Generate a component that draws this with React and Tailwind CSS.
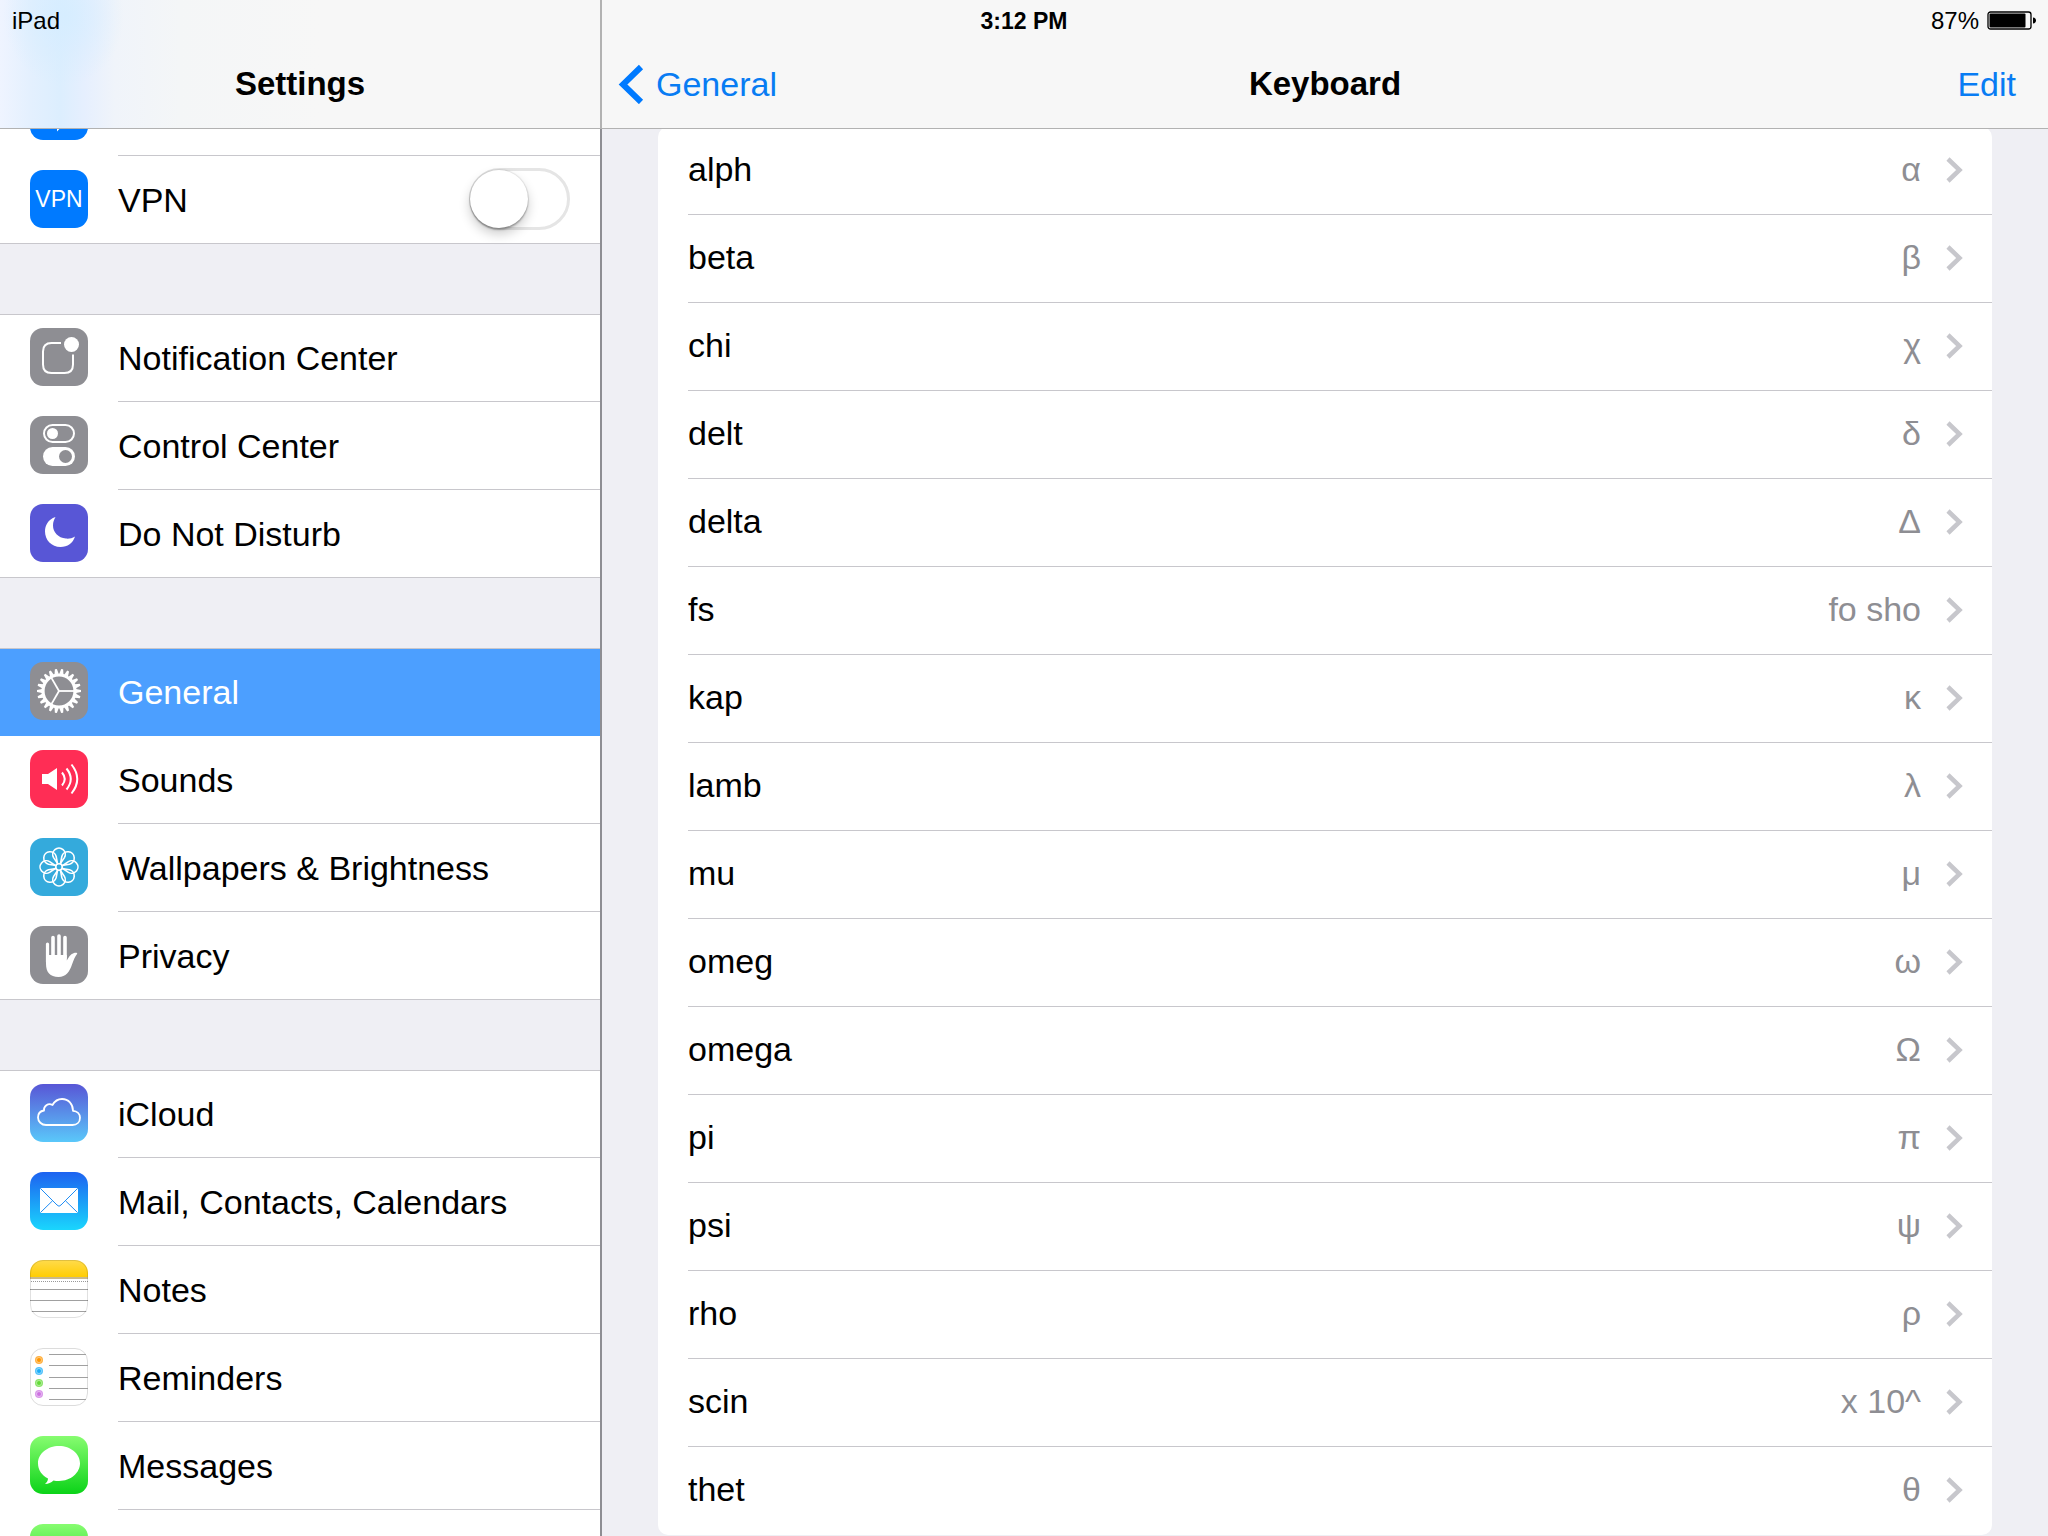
const GRAY = '#8e8e93';

function Tile({ children }) {
  return (
    <svg viewBox="0 0 58 58" className="size-[58px] shrink-0" aria-hidden="true">
      {children}
    </svg>
  );
}

function Plate({ fill }) {
  return <rect width="58" height="58" rx="13" fill={fill} />;
}

function Gradient({ id, from, to }) {
  return (
    <defs>
      <linearGradient id={id} x1="0" y1="0" x2="0" y2="1">
        <stop offset="0" stopColor={from} />
        <stop offset="1" stopColor={to} />
      </linearGradient>
    </defs>
  );
}

function BluetoothIcon() {
  return (
    <Tile>
      <Plate fill="#007aff" />
      <path d="M19 20 37 38 28 47V11L37 20 19 38" fill="none" stroke="#fff" strokeWidth="2" />
    </Tile>
  );
}

function VpnIcon() {
  return (
    <span
      aria-hidden="true"
      className="flex size-[58px] shrink-0 items-center justify-center rounded-[13px] bg-[#007aff] text-[23px] leading-none text-white"
    >
      VPN
    </span>
  );
}

function NotificationIcon() {
  return (
    <Tile>
      <Plate fill={GRAY} />
      <path
        d="M31 15H21.500C16 15 13 18 13 23.500V36.500C13 42 16 45 21.500 45H34.500C40 45 43 42 43 36.500V26.500"
        fill="none"
        stroke="#fff"
        strokeWidth="2"
      />
      <circle cx="41.500" cy="16.500" r="7.500" fill="#fff" />
    </Tile>
  );
}

function ControlIcon() {
  return (
    <Tile>
      <Plate fill={GRAY} />
      <rect x="14" y="9" width="30" height="17" rx="8.500" fill="none" stroke="#fff" strokeWidth="2" />
      <circle cx="22.500" cy="17.500" r="5.500" fill="#fff" />
      <rect x="13" y="31" width="32" height="19" rx="9.500" fill="#fff" />
      <circle cx="35.500" cy="40.500" r="6.500" fill={GRAY} />
    </Tile>
  );
}

function MoonIcon() {
  return (
    <Tile>
      <Plate fill="#5856d6" />
      <path
        d="M25.500 13C18 15.500 15 21.500 15 27.500C15 36 21.500 43 30.500 43C37.500 43 43 39 45 32.500C42 34.200 39 35 36 34.600C28 33.800 23 28 23 21.500C23 18 24 15.500 25.500 13Z"
        fill="#fff"
      />
    </Tile>
  );
}

const TEETH = Array.from({ length: 22 }, (_, i) => (i * 360) / 22);

function GearIcon() {
  return (
    <Tile>
      <Plate fill={GRAY} />
      <g stroke="#fff" fill="none">
        <circle cx="29" cy="29" r="16" strokeWidth="3.200" />
        {[0, 120, 240].map((a) => (
          <path key={a} d="M29 29H45" strokeWidth="1.800" transform={`rotate(${a} 29 29)`} />
        ))}
      </g>
      {TEETH.map((a) => (
        <path key={a} d="M46 26.900 51 28V30L46 31.100Z" fill="#fff" transform={`rotate(${a} 29 29)`} />
      ))}
    </Tile>
  );
}

function SpeakerIcon() {
  return (
    <Tile>
      <Plate fill="#ff2d55" />
      <path d="M12 24H18L27 18V40L18 34H12Z" fill="#fff" />
      <g fill="none" stroke="#fff" strokeWidth="2">
        <path d="M32 22.500Q37.500 29 32 35.500" />
        <path d="M36.500 18.500Q45 29 36.500 39.500" />
        <path d="M41.500 14.500Q53 29 41.500 43.500" />
      </g>
    </Tile>
  );
}

const PETALS = Array.from({ length: 8 }, (_, i) => i * 45);

function FlowerIcon() {
  return (
    <Tile>
      <Plate fill="#34aadc" />
      <g fill="none" stroke="#fff" strokeWidth="1.600">
        {PETALS.map((a) => (
          <path
            key={a}
            d="M28 26 23.600 19.600A6.300 6.300 0 1 1 34.400 19.600L30 26"
            transform={`rotate(${a} 29 29)`}
          />
        ))}
        <circle cx="29" cy="29" r="3.200" />
      </g>
    </Tile>
  );
}

function HandIcon() {
  return (
    <Tile>
      <Plate fill={GRAY} />
      <g stroke="#fff" strokeLinecap="round" fill="none">
        <path d="M17.500 18V36" strokeWidth="3.200" />
        <path d="M23 11.500V32M29 10V32M35 11.500V32" strokeWidth="3.600" />
      </g>
      <path
        d="M16 29H36.800V34.500C38.500 31.500 40.500 28 43.500 27.200C45.500 26.700 47.500 26.600 47.200 27.800C45 30.500 43.500 34.500 42 38.500C39.500 46 36 51 28.500 51C20 51 16 46 16 38Z"
        fill="#fff"
      />
    </Tile>
  );
}

function CloudIcon() {
  return (
    <Tile>
      <Gradient id="cloud" from="#5856d6" to="#5ac8fa" />
      <Plate fill="url(#cloud)" />
      <path
        d="M16 41C11.500 41 8 37.500 8 33.500C8 29.500 10.500 27 14 26.500C13.500 22.500 18 18.500 22.500 21C24.500 17.500 27.500 15 32 15C38.500 15 43 20 43 26.800C47 27 50 29.800 50 33.800C50 38 47 41 42.500 41Z"
        fill="none"
        stroke="#fff"
        strokeWidth="1.800"
        strokeLinejoin="round"
      />
    </Tile>
  );
}

function MailIcon() {
  return (
    <Tile>
      <Gradient id="mail" from="#1d62f0" to="#1ad6fd" />
      <Plate fill="url(#mail)" />
      <rect x="10" y="16" width="38" height="25" rx="1.500" fill="#fff" />
      <path
        d="M10.500 16.500 27 33Q29 35.500 31 33L47.500 16.500M10.500 40.500 22.500 28.800M47.500 40.500 35.500 28.800"
        fill="none"
        stroke="#1f8df5"
        strokeWidth="1"
      />
    </Tile>
  );
}

function NotesIcon() {
  return (
    <Tile>
      <Gradient id="notes" from="#ffdb4c" to="#ffcd02" />
      <clipPath id="notesClip">
        <rect width="58" height="58" rx="13" />
      </clipPath>
      <g clipPath="url(#notesClip)">
        <rect width="58" height="58" fill="#fff" />
        <rect width="58" height="17" fill="url(#notes)" />
        <path d="M0 18H58" stroke="#c9b98a" strokeWidth="2" />
        <path d="M1 21.500H58" stroke="#999" strokeDasharray="1 1" />
        <path d="M0 29.500H58M0 40.500H58M0 51.500H58" stroke="#a0a0a0" />
      </g>
      <rect x=".5" y=".5" width="57" height="57" rx="12.500" fill="none" stroke="#000" strokeOpacity=".12" />
    </Tile>
  );
}

const REMINDERS = [
  [12, '#ff9500'],
  [23, '#1badf8'],
  [35, '#63da38'],
  [46, '#cc73e1'],
];

function RemindersIcon() {
  return (
    <Tile>
      <rect x=".5" y=".5" width="57" height="57" rx="12.500" fill="#fff" stroke="#dcdcdc" />
      {REMINDERS.map(([y, c]) => (
        <g key={y} fill={c}>
          <circle cx="9" cy={y} r="4" fillOpacity=".75" />
          <circle cx="9" cy={y} r="2.500" stroke="#fff" strokeOpacity=".6" strokeWidth=".7" />
        </g>
      ))}
      <path d="M19 6.500H56M19 17.500H58M19 29.500H58M19 40.500H58M19 51.500H56" stroke="#a0a0a0" />
    </Tile>
  );
}

function MessagesIcon() {
  return (
    <Tile>
      <Gradient id="messages" from="#87fc70" to="#0bd318" />
      <Plate fill="url(#messages)" />
      <path
        d="M29 10C40.600 10 50 17.600 50 27.300C50 37 40.600 45 29 45C27 45 25 44.800 23.500 44.400C21 46.600 18.500 47.900 15 48C16.800 46.500 18 44.500 18 42.500C11.800 39.500 8 34 8 27.300C8 17.600 17.400 10 29 10Z"
        fill="#fff"
      />
    </Tile>
  );
}

function FaceTimeIcon() {
  return (
    <Tile>
      <Gradient id="facetime" from="#87fc70" to="#0bd318" />
      <Plate fill="url(#facetime)" />
      <path d="M10 21H36V37H10ZM38 28 47 21V37L38 31Z" fill="#fff" />
    </Tile>
  );
}

const GROUPS = [
  [
    { name: 'Bluetooth', Icon: BluetoothIcon },
    { name: 'VPN', label: 'VPN', Icon: VpnIcon, toggle: true },
  ],
  [
    { name: 'Notification Center', label: 'Notification Center', Icon: NotificationIcon },
    { name: 'Control Center', label: 'Control Center', Icon: ControlIcon },
    { name: 'Do Not Disturb', label: 'Do Not Disturb', Icon: MoonIcon },
  ],
  [
    { name: 'General', label: 'General', Icon: GearIcon, selected: true },
    { name: 'Sounds', label: 'Sounds', Icon: SpeakerIcon },
    { name: 'Wallpapers & Brightness', label: 'Wallpapers & Brightness', Icon: FlowerIcon },
    { name: 'Privacy', label: 'Privacy', Icon: HandIcon },
  ],
  [
    { name: 'iCloud', label: 'iCloud', Icon: CloudIcon },
    { name: 'Mail, Contacts, Calendars', label: 'Mail, Contacts, Calendars', Icon: MailIcon },
    { name: 'Notes', label: 'Notes', Icon: NotesIcon },
    { name: 'Reminders', label: 'Reminders', Icon: RemindersIcon },
    { name: 'Messages', label: 'Messages', Icon: MessagesIcon },
    { name: 'FaceTime', Icon: FaceTimeIcon },
  ],
];

const SHORTCUTS = [
  ['alph', 'α'],
  ['beta', 'β'],
  ['chi', 'χ'],
  ['delt', 'δ'],
  ['delta', 'Δ'],
  ['fs', 'fo sho'],
  ['kap', 'κ'],
  ['lamb', 'λ'],
  ['mu', 'μ'],
  ['omeg', 'ω'],
  ['omega', 'Ω'],
  ['pi', 'π'],
  ['psi', 'ψ'],
  ['rho', 'ρ'],
  ['scin', 'x 10^'],
  ['thet', 'θ'],
];

function SidebarRow({ name, label, Icon, toggle, selected, last }) {
  const line = last || selected ? 'border-transparent' : 'border-[#c8c7cc]';
  const body = (
    <>
      <span className="flex h-full items-center pb-[2px]">
        <Icon />
      </span>
      <span className={`flex h-full flex-1 items-center border-b ${line}`}>{label}</span>
    </>
  );
  const base = 'flex h-[88px] items-center gap-[30px] pl-[30px]';
  if (toggle) {
    return (
      <label className={`${base} relative`}>
        {body}
        <input
          type="checkbox"
          role="switch"
          className="absolute top-3 right-[30px] h-[62px] w-[101px] appearance-none rounded-full border-[3px] border-[#e5e5e5] bg-white before:absolute before:-top-px before:-left-[2px] before:size-[58px] before:rounded-full before:bg-white before:shadow-[0_6px_12px_rgba(0,0,0,0.2),0_2px_2px_rgba(0,0,0,0.25),0_0_1px_1px_rgba(0,0,0,0.08)] before:content-['']"
        />
      </label>
    );
  }
  return (
    <a href="#" aria-label={name} className={selected ? `${base} bg-[#4c9fff] text-white` : base}>
      {body}
    </a>
  );
}

function Sidebar() {
  return (
    <section className="flex w-[600px] shrink-0 flex-col">
      <header className="flex h-[129px] shrink-0 items-end justify-center border-b border-[#b2b2b2] bg-[#f7f7f7] bg-[radial-gradient(60px_70px_at_64px_16px,#d6edff_0%,transparent_100%),linear-gradient(90deg,#eff4ff_0px,#e4f0fe_30px,#dceefe_60px,#e6effe_85px,#f0f4fa_115px,#f4f6f7_180px,#f7f7f7_320px)] pb-6">
        <h1 className="text-[33px] leading-[40px] font-bold">Settings</h1>
      </header>
      <nav aria-label="Settings" className="min-h-0 flex-1 overflow-hidden">
        <div className="-mt-[61px] flex flex-col gap-[70px]">
          {GROUPS.map((rows) => (
            <div key={rows[0].name} className="relative bg-white">
              {rows.map((row, i) => (
                <SidebarRow key={row.name} {...row} last={i === rows.length - 1} />
              ))}
              <div className="pointer-events-none absolute inset-0 border-y border-[#c8c7cc]" />
            </div>
          ))}
        </div>
      </nav>
    </section>
  );
}

function Detail() {
  return (
    <section className="flex min-w-0 flex-1 flex-col">
      <header className="grid h-[129px] shrink-0 grid-cols-3 items-end border-b border-[#b2b2b2] bg-[#f7f7f7] px-4 pb-6 text-[34px] leading-[40px]">
        <button type="button" className="flex items-center gap-3 text-[#087cf3]">
          <svg viewBox="0 0 26 40" className="h-[40px] w-[26px]" aria-hidden="true">
            <path d="M23 3 5 20.500 23 38" fill="none" stroke="#007aff" strokeWidth="6" />
          </svg>
          General
        </button>
        <h2 className="text-center text-[33px] font-bold">Keyboard</h2>
        <button type="button" className="justify-self-end pr-4 text-[#087cf3]">
          Edit
        </button>
      </header>
      <div className="min-h-0 flex-1 overflow-hidden px-14">
        <ul className="-mt-[2px] rounded-[10px] bg-white">
          {SHORTCUTS.map(([phrase, value], i) => (
            <li key={phrase} className="pl-[30px]">
              <a
                href="#"
                className={`flex h-[88px] items-center border-b pr-7 pb-[2px] ${
                  i === SHORTCUTS.length - 1 ? 'border-transparent' : 'border-[#c8c7cc]'
                }`}
              >
                <span className="flex-1 pb-[2px]">{phrase}</span>
                <span className="mr-[25px] pb-[2px] text-[#8e8e93]">{value}</span>
                <svg viewBox="0 0 18 26" className="h-[26px] w-[18px]" aria-hidden="true">
                  <path d="M2 2 13.500 13 2 24" fill="none" stroke="#c7c7cc" strokeWidth="4.500" />
                </svg>
              </a>
            </li>
          ))}
        </ul>
      </div>
    </section>
  );
}

function StatusBar() {
  return (
    <div className="absolute inset-x-0 top-0 grid grid-cols-3 items-center px-3 text-[24px] leading-[42px]">
      <span>iPad</span>
      <span className="text-center text-[23px] font-bold">3:12 PM</span>
      <span className="flex items-center justify-end gap-2">
        87%
        <svg viewBox="0 0 49 20" className="h-5 w-[49px]" aria-hidden="true">
          <rect x="1" y="1" width="43" height="17" rx="2.500" fill="none" stroke="#000" strokeWidth="1.300" />
          <rect x="2.500" y="2.500" width="36" height="14" rx="1" />
          <path d="M46 6.500C50 6.500 50 12.500 46 12.500Z" />
        </svg>
      </span>
    </div>
  );
}

export default function App() {
  return (
    <main className="relative flex h-screen overflow-hidden bg-[#efeff4] font-['Liberation_Sans',Arial,sans-serif] text-[34px] leading-[40px] text-black">
      <Sidebar />
      <div className="flex w-[2px] shrink-0 flex-col">
        <div className="h-[129px] bg-[#b2b2b2]" />
        <div className="flex-1 bg-[#8e8e93]" />
      </div>
      <Detail />
      <StatusBar />
    </main>
  );
}
